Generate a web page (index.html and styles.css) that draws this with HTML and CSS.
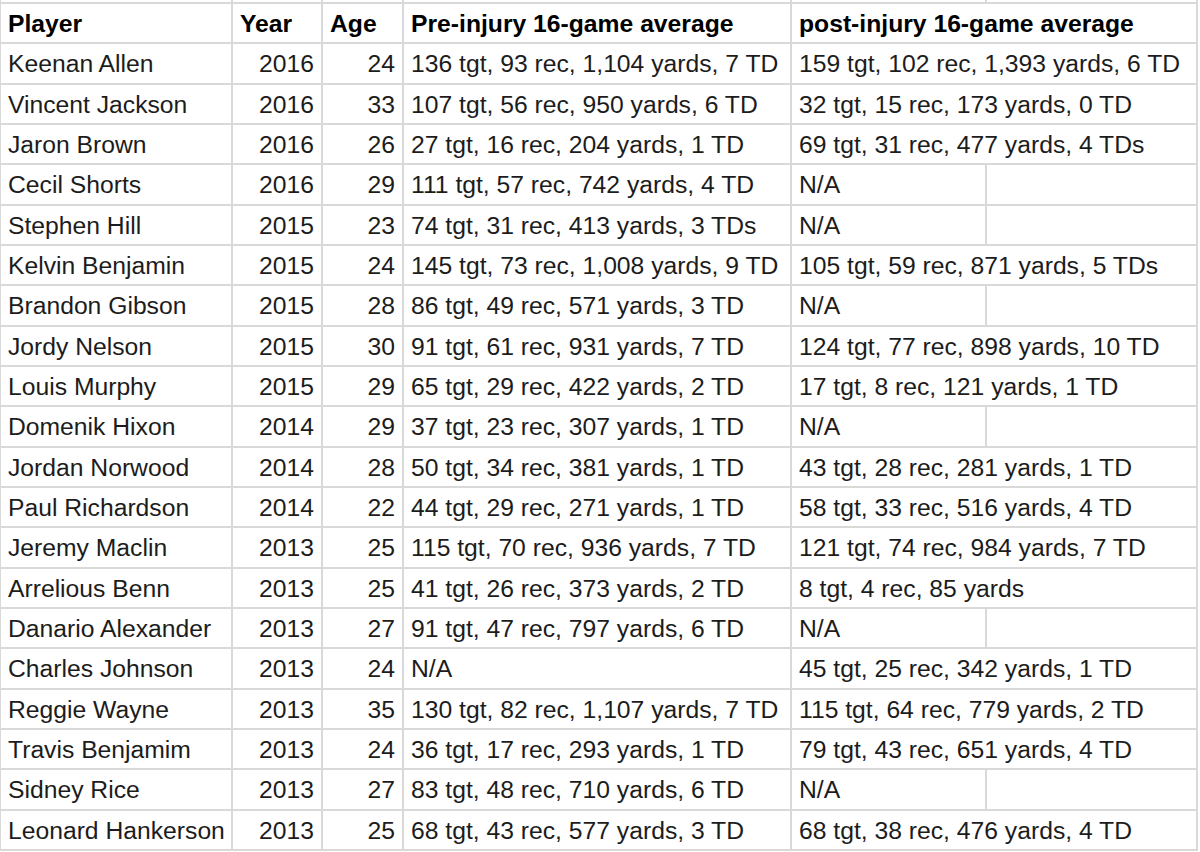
FILE: index.html
```html
<!DOCTYPE html>
<html>
<head>
<meta charset="utf-8">
<link rel="stylesheet" href="styles.css">
</head>
<body>
<div class="sheet">
  <div class="cell top"></div><div class="cell top"></div><div class="cell top"></div><div class="cell top"></div><div class="cell top"></div><div class="cell top"></div>

  <div class="cell head">Player</div><div class="cell head">Year</div><div class="cell head">Age</div><div class="cell head">Pre-injury 16-game average</div><div class="cell head wide">post-injury 16-game average</div>

  <div class="cell">Keenan Allen</div><div class="cell num">2016</div><div class="cell num">24</div><div class="cell">136 tgt, 93 rec, 1,104 yards, 7 TD</div><div class="cell wide">159 tgt, 102 rec, 1,393 yards, 6 TD</div>
  <div class="cell">Vincent Jackson</div><div class="cell num">2016</div><div class="cell num">33</div><div class="cell">107 tgt, 56 rec, 950 yards, 6 TD</div><div class="cell wide">32 tgt, 15 rec, 173 yards, 0 TD</div>
  <div class="cell">Jaron Brown</div><div class="cell num">2016</div><div class="cell num">26</div><div class="cell">27 tgt, 16 rec, 204 yards, 1 TD</div><div class="cell wide">69 tgt, 31 rec, 477 yards, 4 TDs</div>
  <div class="cell">Cecil Shorts</div><div class="cell num">2016</div><div class="cell num">29</div><div class="cell">111 tgt, 57 rec, 742 yards, 4 TD</div><div class="cell">N/A</div><div class="cell"></div>
  <div class="cell">Stephen Hill</div><div class="cell num">2015</div><div class="cell num">23</div><div class="cell">74 tgt, 31 rec, 413 yards, 3 TDs</div><div class="cell">N/A</div><div class="cell"></div>
  <div class="cell">Kelvin Benjamin</div><div class="cell num">2015</div><div class="cell num">24</div><div class="cell">145 tgt, 73 rec, 1,008 yards, 9 TD</div><div class="cell wide">105 tgt, 59 rec, 871 yards, 5 TDs</div>
  <div class="cell">Brandon Gibson</div><div class="cell num">2015</div><div class="cell num">28</div><div class="cell">86 tgt, 49 rec, 571 yards, 3 TD</div><div class="cell">N/A</div><div class="cell"></div>
  <div class="cell">Jordy Nelson</div><div class="cell num">2015</div><div class="cell num">30</div><div class="cell">91 tgt, 61 rec, 931 yards, 7 TD</div><div class="cell wide">124 tgt, 77 rec, 898 yards, 10 TD</div>
  <div class="cell">Louis Murphy</div><div class="cell num">2015</div><div class="cell num">29</div><div class="cell">65 tgt, 29 rec, 422 yards, 2 TD</div><div class="cell wide">17 tgt, 8 rec, 121 yards, 1 TD</div>
  <div class="cell">Domenik Hixon</div><div class="cell num">2014</div><div class="cell num">29</div><div class="cell">37 tgt, 23 rec, 307 yards, 1 TD</div><div class="cell">N/A</div><div class="cell"></div>
  <div class="cell">Jordan Norwood</div><div class="cell num">2014</div><div class="cell num">28</div><div class="cell">50 tgt, 34 rec, 381 yards, 1 TD</div><div class="cell wide">43 tgt, 28 rec, 281 yards, 1 TD</div>
  <div class="cell">Paul Richardson</div><div class="cell num">2014</div><div class="cell num">22</div><div class="cell">44 tgt, 29 rec, 271 yards, 1 TD</div><div class="cell wide">58 tgt, 33 rec, 516 yards, 4 TD</div>
  <div class="cell">Jeremy Maclin</div><div class="cell num">2013</div><div class="cell num">25</div><div class="cell">115 tgt, 70 rec, 936 yards, 7 TD</div><div class="cell wide">121 tgt, 74 rec, 984 yards, 7 TD</div>
  <div class="cell">Arrelious Benn</div><div class="cell num">2013</div><div class="cell num">25</div><div class="cell">41 tgt, 26 rec, 373 yards, 2 TD</div><div class="cell wide">8 tgt, 4 rec, 85 yards</div>
  <div class="cell">Danario Alexander</div><div class="cell num">2013</div><div class="cell num">27</div><div class="cell">91 tgt, 47 rec, 797 yards, 6 TD</div><div class="cell">N/A</div><div class="cell"></div>
  <div class="cell">Charles Johnson</div><div class="cell num">2013</div><div class="cell num">24</div><div class="cell">N/A</div><div class="cell wide">45 tgt, 25 rec, 342 yards, 1 TD</div>
  <div class="cell">Reggie Wayne</div><div class="cell num">2013</div><div class="cell num">35</div><div class="cell">130 tgt, 82 rec, 1,107 yards, 7 TD</div><div class="cell wide">115 tgt, 64 rec, 779 yards, 2 TD</div>
  <div class="cell">Travis Benjamim</div><div class="cell num">2013</div><div class="cell num">24</div><div class="cell">36 tgt, 17 rec, 293 yards, 1 TD</div><div class="cell wide">79 tgt, 43 rec, 651 yards, 4 TD</div>
  <div class="cell">Sidney Rice</div><div class="cell num">2013</div><div class="cell num">27</div><div class="cell">83 tgt, 48 rec, 710 yards, 6 TD</div><div class="cell">N/A</div><div class="cell"></div>
  <div class="cell">Leonard Hankerson</div><div class="cell num">2013</div><div class="cell num">25</div><div class="cell">68 tgt, 43 rec, 577 yards, 3 TD</div><div class="cell wide">68 tgt, 38 rec, 476 yards, 4 TD</div>
</div>
</body>
</html>
```
FILE: styles.css
```css
html, body {
  margin: 0;
  padding: 0;
  background: #ffffff;
}

body {
  width: 1200px;
  height: 852px;
  overflow: hidden;
}

.sheet {
  width: 1195px;
  display: grid;
  grid-template-columns: 230px 88px 79px 386px 193px 209px;
  grid-template-rows: 2px repeat(21, 38.33px);
  gap: 2px;
  padding: 0 2px 2px 1px;
  background: #d9d9d9;
  font-family: "Liberation Sans", Arial, sans-serif;
  font-size: 24.7px;
  color: #1c1c1c;
}

.cell {
  background: #ffffff;
  display: flex;
  align-items: center;
  padding: 2px 6px 0 7px;
  line-height: 28px;
  white-space: nowrap;
  overflow: visible;
  min-width: 0;
}

.cell.top {
  padding: 0;
}

.cell.num {
  justify-content: flex-end;
  padding-right: 7px;
}

.cell.head {
  font-weight: bold;
  color: #000000;
}

.cell.wide {
  grid-column: span 2;
}
```
